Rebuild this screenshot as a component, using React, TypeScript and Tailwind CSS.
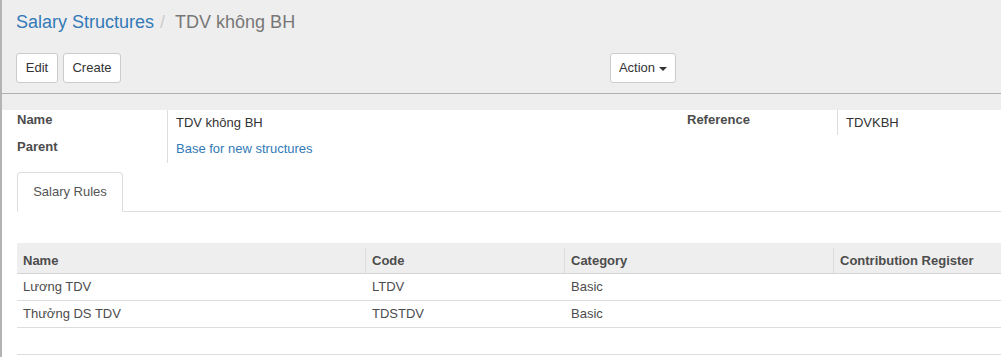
export default function App() {
    const rules = [
        { name: 'Lương TDV', code: 'LTDV', category: 'Basic', register: '' },
        { name: 'Thưởng DS TDV', code: 'TDSTDV', category: 'Basic', register: '' },
    ];

    return (
        <div className="w-[1001px] h-[357px] overflow-hidden bg-white border-l-2 border-[#b3b3b3] text-[13px] text-[#4c4c4c] font-['Liberation_Sans',Arial,sans-serif]">
            {/* control panel */}
            <div className="bg-[#efeeee] border-b border-[#b0b0b0] pl-[14px] pt-[10px] h-[94px]">
                <div className="flex items-center h-[24px] text-[18px]">
                    <a className="text-[#337ab7]">Salary Structures</a>
                    <span className="text-[#cccccc] px-[6px]">/</span>
                    <span className="text-[#777777] pl-[4px]">TDV không BH</span>
                </div>
                <div className="flex mt-[19px]">
                    <div className="flex gap-[5px] w-[594px]">
                        <button className="h-[30px] w-[42px] bg-white border border-[#cccccc] rounded-[3px] text-[#333]">Edit</button>
                        <button className="h-[30px] w-[58px] bg-white border border-[#cccccc] rounded-[3px] text-[#333]">Create</button>
                    </div>
                    <button className="h-[30px] w-[66px] bg-white border border-[#cccccc] rounded-[3px] text-[#333] flex items-center justify-center gap-[4px]">
                        Action
                        <span className="w-0 h-0 border-x-[4px] border-x-transparent border-t-[4px] border-t-[#333] mt-[1px]"></span>
                    </button>
                </div>
            </div>
            <div className="bg-[#efeeee] h-[16px]"></div>

            {/* form */}
            <div className="pl-[15px]">
                <div className="flex">
                    <div className="grid grid-cols-[150px_520px]">
                        <div className="h-[27px] pt-[1px] leading-[18px] font-bold">Name</div>
                        <div className="h-[27px] pt-[4px] leading-[18px] pl-[8px] border-l border-[#dddddd] text-[#333]">TDV không BH</div>
                        <div className="h-[26px] pt-[1px] leading-[18px] font-bold">Parent</div>
                        <div className="h-[26px] pt-[3px] leading-[18px] pl-[8px] border-l border-[#dddddd] text-[#337ab7]">Base for new structures</div>
                    </div>
                    <div className="grid grid-cols-[150px_1fr] h-[25px]">
                        <div className="pt-[1px] leading-[18px] font-bold">Reference</div>
                        <div className="pt-[4px] leading-[18px] pl-[8px] border-l border-[#dddddd] text-[#333]">TDVKBH</div>
                    </div>
                </div>

                {/* tabs */}
                <div className="mt-[9px] flex border-b border-[#dddddd]">
                    <div className="h-[40px] w-[106px] -mb-px border border-[#dddddd] border-b-white bg-white rounded-t-[4px] pt-[10px] leading-[18px] text-center text-[#555]">
                        Salary Rules
                    </div>
                </div>

                {/* table */}
                <table className="mt-[31px] w-[1200px] border-collapse">
                    <thead>
                        <tr className="bg-[#eeeeee] border-b border-[#d4d4d4] text-left font-bold">
                            <th className="w-[348px] p-0 pt-[5px]">
                                <div className="h-[25px] flex items-center pl-[6px] pt-[1px]">Name</div>
                            </th>
                            <th className="w-[199px] p-0 pt-[5px]">
                                <div className="h-[25px] flex items-center pl-[6px] pt-[1px] border-l border-[#dddddd]">Code</div>
                            </th>
                            <th className="w-[269px] p-0 pt-[5px]">
                                <div className="h-[25px] flex items-center pl-[6px] pt-[1px] border-l border-[#dddddd]">Category</div>
                            </th>
                            <th className="p-0 pt-[5px]">
                                <div className="h-[25px] flex items-center pl-[6px] pt-[1px] border-l border-[#dddddd]">Contribution Register</div>
                            </th>
                        </tr>
                    </thead>
                    <tbody>
                        {rules.map((r) => (
                            <tr key={r.code} className="h-[27px] border-b border-[#dddddd]">
                                <td className="px-[6px] py-0">{r.name}</td>
                                <td className="px-[7px] py-0">{r.code}</td>
                                <td className="px-[7px] py-0">{r.category}</td>
                                <td className="px-[7px] py-0">{r.register}</td>
                            </tr>
                        ))}
                        <tr className="h-[27px] border-b border-[#dddddd]">
                            <td colSpan={4}></td>
                        </tr>
                    </tbody>
                </table>
            </div>
        </div>
    );
}
